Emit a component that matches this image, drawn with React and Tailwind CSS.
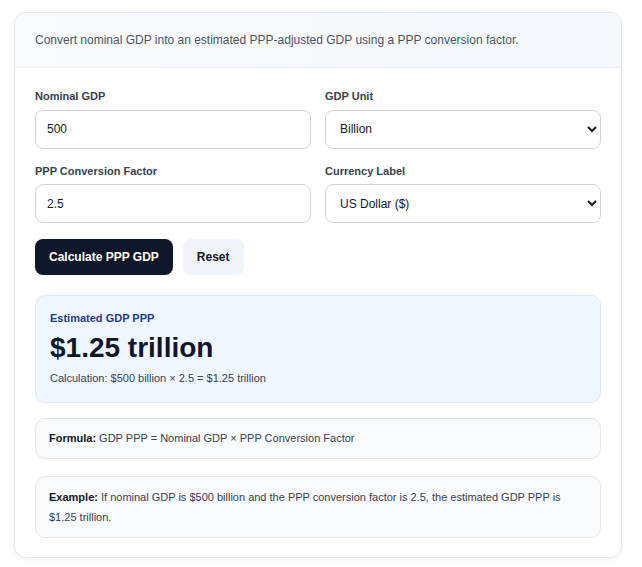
import React, { useState } from "react";

const font = { fontFamily: '"Liberation Sans", Arial, sans-serif' };

const Field = ({ label, children }) => (
  <div className="flex flex-col gap-[5px]">
    <label className="text-[11px] font-bold text-[#374151]">{label}</label>
    {children}
  </div>
);

export default function App() {
  const [gdp, setGdp] = useState("500");
  const [factor, setFactor] = useState("2.5");

  return (
    <div className="min-h-screen bg-white px-[14px] pt-[12px]" style={font}>
      <div className="w-[608px] overflow-hidden rounded-[12px] border border-[#e5e7eb] bg-white shadow-[0_1px_4px_rgba(0,0,0,0.06)]">
        <div className="flex h-[55px] items-center border-b border-[#eef0f3] bg-gradient-to-r from-[#f8fafc] to-[#f5f8fc] px-[20px]">
          <p className="text-[12px] text-[#4b5563]">
            Convert nominal GDP into an estimated PPP-adjusted GDP using a PPP conversion factor.
          </p>
        </div>

        <div className="flex flex-col px-[20px] pt-[20px] pb-[19px]">
          <div className="grid grid-cols-2 gap-x-[14px] gap-y-[14px]">
            <Field label="Nominal GDP">
              <input
                value={gdp}
                onChange={(e) => setGdp(e.target.value)}
                className="h-[39px] rounded-[8px] border border-[#d1d5db] bg-white px-[11px] text-[12px] text-[#111827] outline-none"
              />
            </Field>
            <Field label="GDP Unit">
              <select className="h-[39px] rounded-[8px] border border-[#d1d5db] bg-white px-[10px] text-[12px] text-[#111827] outline-none">
                <option>Billion</option>
                <option>Trillion</option>
                <option>Million</option>
              </select>
            </Field>
            <Field label="PPP Conversion Factor">
              <input
                value={factor}
                onChange={(e) => setFactor(e.target.value)}
                className="h-[39px] rounded-[8px] border border-[#d1d5db] bg-white px-[11px] text-[12px] text-[#111827] outline-none"
              />
            </Field>
            <Field label="Currency Label">
              <select className="h-[39px] rounded-[8px] border border-[#d1d5db] bg-white px-[10px] text-[12px] text-[#111827] outline-none">
                <option>US Dollar ($)</option>
                <option>Euro (€)</option>
              </select>
            </Field>
          </div>

          <div className="mt-[16px] flex gap-[10px]">
            <button className="h-[36px] rounded-[8px] bg-[#0f172a] px-[14px] text-[12px] font-bold text-white">
              Calculate PPP GDP
            </button>
            <button className="h-[36px] rounded-[8px] bg-[#f1f5f9] px-[14px] text-[12px] font-bold text-[#111827]">
              Reset
            </button>
          </div>

          <div className="mt-[20px] rounded-[10px] border border-[#dbeafe] bg-[#eff6ff] px-[14px] pt-[14px] pb-[16px]">
            <div className="text-[11px] font-bold text-[#1e3a8a]">Estimated GDP PPP</div>
            <div className="mt-[4px] text-[28px] font-bold leading-[34px] text-[#0f172a]">$1.25 trillion</div>
            <div className="mt-[5px] text-[11px] text-[#374151]">
              Calculation: $500 billion × 2.5 = $1.25 trillion
            </div>
          </div>

          <div className="mt-[15px] rounded-[10px] border border-[#e5e7eb] bg-[#f9fafb] px-[13px] py-[11px] text-[11px] text-[#374151]">
            <b className="text-[#111827]">Formula:</b> GDP PPP = Nominal GDP × PPP Conversion Factor
          </div>

          <div className="mt-[17px] rounded-[10px] border border-[#e5e7eb] bg-[#f9fafb] px-[13px] py-[10px] text-[11px] leading-[20px] text-[#374151]">
            <p>
              <b className="text-[#111827]">Example:</b> If nominal GDP is $500 billion and the PPP conversion factor is 2.5, the estimated GDP PPP is $1.25 trillion.
            </p>
          </div>
        </div>
      </div>
    </div>
  );
}
